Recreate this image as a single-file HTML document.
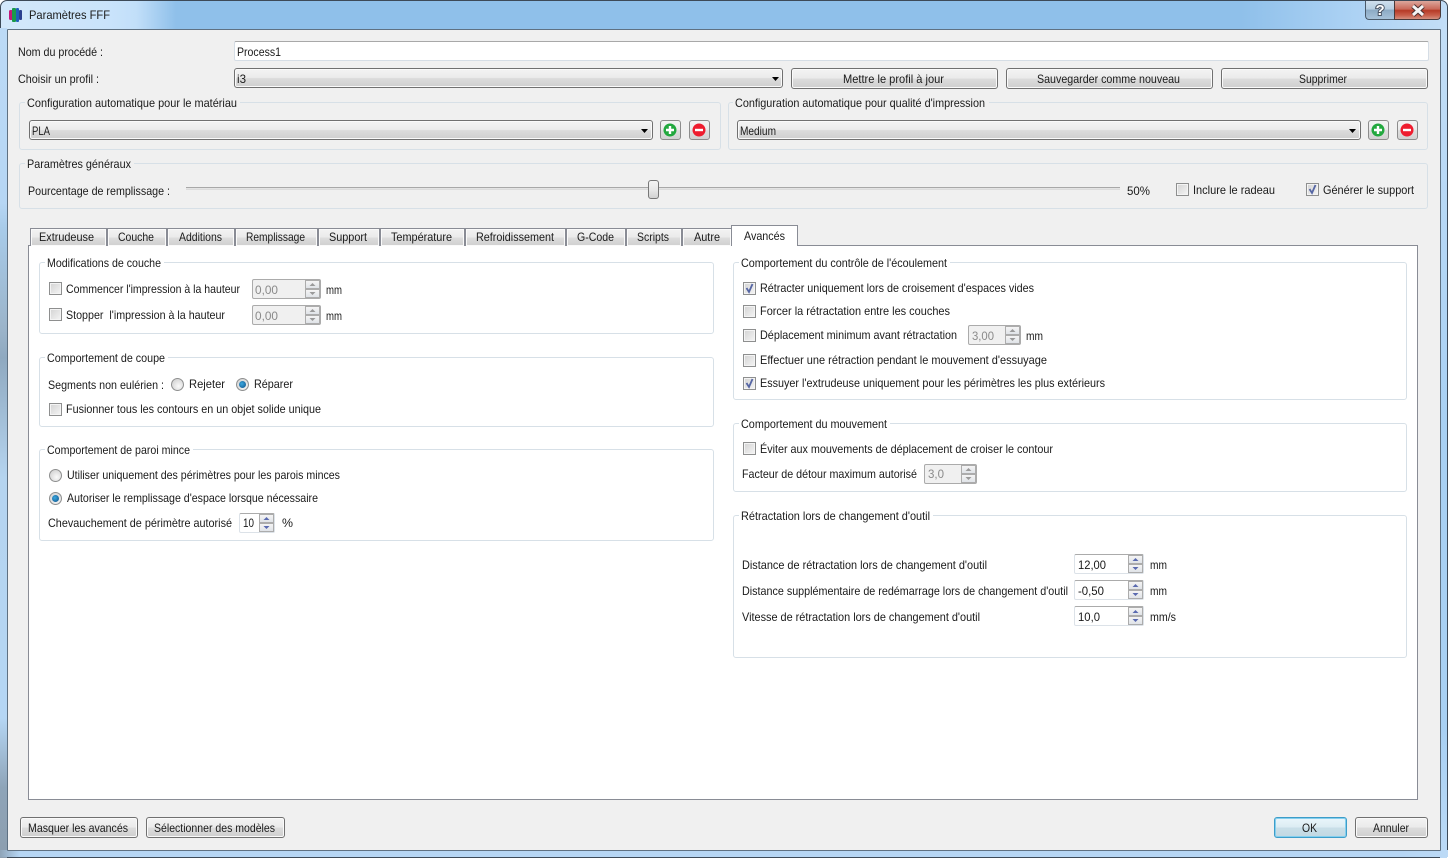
<!DOCTYPE html>
<html lang="fr"><head><meta charset="utf-8"><title>Paramètres FFF</title>
<style>
html,body{margin:0;padding:0;width:1448px;height:858px;overflow:hidden;background:#fff}
div{position:absolute;box-sizing:border-box}
#win{left:0;top:0;width:1448px;height:858px;border:1px solid #3d4a58;border-radius:7px 7px 4px 4px;background:linear-gradient(90deg,#d3e8fb 0,#c9e3fb 110px,#c2dff9 135px,#8fc0ea 175px,#8fc0ea 1240px,#a9d0f3 1340px,#c3def7 1447px);overflow:hidden}
#lft{left:0;top:28px;width:7px;height:830px;background:linear-gradient(180deg,#bcdaf6 0,#b6d6f4 175px,#a8cbe9 200px,#9bb4ca 300px,#8fa9c0 330px,#b5d4ef 450px,#b5d6f4 690px,#8ea4b8 760px,#8d9fb0 820px)}
#rgt{left:1440px;top:28px;width:7px;height:830px;background:linear-gradient(180deg,#c3def7,#a8d0f3 400px,#a8d0f3 700px,#bcdaf6)}
#bot{left:0;top:850px;width:1448px;height:7px;background:linear-gradient(90deg,#8ea4b8,#b6d6f4 20px,#b6d6f4 1400px,#bcdaf6)}
#cli{left:7px;top:29px;width:1434px;height:822px;background:#f0f0f0;border:1px solid #5f7182;border-radius:1px}
.le{background:#fff;border:1px solid #d5dde5;border-top-color:#a8a8a8;border-radius:2px}
.cb,.bt{border:1px solid #707070;border-radius:3px;background:linear-gradient(180deg,#f3f3f3 0,#ebebeb 48%,#dcdcdc 52%,#cfcfcf 100%);box-shadow:inset 0 0 0 1px #fafafa}
.ic{border:1px solid #8c8c8c;border-radius:3px;background:linear-gradient(180deg,#f3f3f3 0,#ebebeb 48%,#dedede 52%,#d2d2d2 100%)}
.ok{border:1px solid #3d9dc9;border-radius:3px;background:linear-gradient(180deg,#eaf6fb 0,#dcecf3 48%,#c9dfe8 52%,#c2d8e2 100%);box-shadow:inset 0 0 0 1px #84cfee}
.gb{border:1px solid #d7e0e7;border-radius:3px}
.lg{background:#f0f0f0;height:10px}
.lw{background:#fff;height:10px}
.ck{width:13px;height:13px;border:1px solid #8e8f8f;background:#f4f4f4}
.ck:after{content:"";position:absolute;left:1px;top:1px;width:9px;height:9px;background:linear-gradient(135deg,#d6d6d6,#f2f2f2)}
.ra{width:13px;height:13px;border:1px solid #8e8f8f;border-radius:50%;background:radial-gradient(circle at 60% 65%,#fafafa,#d8d8d8 70%)}
.ra.on:after{content:"";position:absolute;left:2px;top:2px;width:7px;height:7px;border-radius:50%;background:radial-gradient(circle at 40% 40%,#3aa7df,#0e4f86)}
.sp{background:#fff;border:1px solid #dce2e8;border-top-color:#ababab;border-radius:2px}
.sp.d{background:#f0f0f0;border:1px solid #ababab}
.sb{width:15px;height:9px;background:linear-gradient(180deg,#f4f4f4,#dfe3e8);border:1px solid #acacac}
.tab{top:228px;height:18px;border:1px solid #898c95;border-bottom:0;background:linear-gradient(180deg,#f2f2f2 0,#ebebeb 48%,#dddddd 52%,#cfcfcf 100%);box-shadow:inset 0 0 0 1px #fafafa}
svg{position:absolute;left:0;top:0}
text{font-family:"Liberation Sans",sans-serif;font-size:12px;fill:#1a1a1a}
.g{fill:#8a8a8a}
</style></head><body>
<div id="win"></div>
<div id="lft"></div><div id="rgt"></div><div id="bot"></div>
<div id="cli"></div>

<div style="left:1365px;top:1px;width:29px;height:19px;border:1px solid #4a5a6a;border-top:0;border-right:0;border-radius:0 0 0 4px;background:linear-gradient(180deg,#cfdfee 0,#b6cee2 45%,#8caac4 50%,#a6c2da 100%)"></div>
<div style="left:1394px;top:1px;width:47px;height:19px;border:1px solid #4a3a3a;border-top:0;border-radius:0 0 4px 0;background:linear-gradient(180deg,#dca79c 0,#c9695a 45%,#b53a26 52%,#c9604c 80%,#d49080 100%)"></div>

<div class="le" style="left:234px;top:41px;width:1195px;height:20px"></div>
<div class="cb" style="left:234px;top:68px;width:549px;height:20px"></div>
<div class="bt" style="left:791px;top:68px;width:207px;height:21px"></div>
<div class="bt" style="left:1006px;top:68px;width:207px;height:21px"></div>
<div class="bt" style="left:1221px;top:68px;width:207px;height:21px"></div>

<div class="gb" style="left:19px;top:102px;width:702px;height:48px"></div>
<div class="gb" style="left:728px;top:102px;width:700px;height:48px"></div>
<div class="lg" style="left:25px;top:98px;width:215px"></div>
<div class="lg" style="left:733px;top:98px;width:256px"></div>
<div class="cb" style="left:29px;top:120px;width:624px;height:20px"></div>
<div class="ic" style="left:660px;top:120px;width:21px;height:20px"></div>
<div class="ic" style="left:689px;top:120px;width:21px;height:20px"></div>
<div class="cb" style="left:737px;top:120px;width:624px;height:20px"></div>
<div class="ic" style="left:1368px;top:120px;width:21px;height:20px"></div>
<div class="ic" style="left:1397px;top:120px;width:21px;height:20px"></div>

<div class="gb" style="left:19px;top:163px;width:1409px;height:46px"></div>
<div class="lg" style="left:25px;top:159px;width:109px"></div>
<div style="left:186px;top:187px;width:934px;height:3px;background:#e4e4e4;border-top:1px solid #a8a8a8;border-bottom:1px solid #dcdcdc"></div>
<div style="left:648px;top:180px;width:11px;height:19px;border:1px solid #777;border-radius:3px;background:linear-gradient(180deg,#f4f4f4,#e8e8e8 50%,#d2d2d2)"></div>
<div class="ck" style="left:1176px;top:183px"></div>
<div class="ck" style="left:1306px;top:183px"></div>

<div style="left:28px;top:245px;width:1390px;height:555px;background:#fff;border:1px solid #898c95"></div>
<div class="tab" style="left:30px;width:77px"></div>
<div class="tab" style="left:107px;width:60px"></div>
<div class="tab" style="left:167px;width:68px"></div>
<div class="tab" style="left:235px;width:83px"></div>
<div class="tab" style="left:318px;width:62px"></div>
<div class="tab" style="left:380px;width:85px"></div>
<div class="tab" style="left:465px;width:101px"></div>
<div class="tab" style="left:566px;width:60px"></div>
<div class="tab" style="left:626px;width:56px"></div>
<div class="tab" style="left:682px;width:50px"></div>
<div style="left:731px;top:225px;width:67px;height:21px;background:#fff;border:1px solid #898c95;border-bottom:0"></div>

<div class="gb" style="left:39px;top:262px;width:675px;height:72px"></div>
<div class="gb" style="left:39px;top:357px;width:675px;height:70px"></div>
<div class="gb" style="left:39px;top:449px;width:675px;height:92px"></div>
<div class="gb" style="left:733px;top:262px;width:674px;height:138px"></div>
<div class="gb" style="left:733px;top:423px;width:674px;height:69px"></div>
<div class="gb" style="left:733px;top:515px;width:674px;height:143px"></div>
<div class="lw" style="left:45px;top:258px;width:119px"></div>
<div class="lw" style="left:45px;top:353px;width:123px"></div>
<div class="lw" style="left:45px;top:445px;width:148px"></div>
<div class="lw" style="left:739px;top:258px;width:211px"></div>
<div class="lw" style="left:739px;top:419px;width:151px"></div>
<div class="lw" style="left:739px;top:511px;width:194px"></div>

<div class="ck" style="left:49px;top:282px"></div>
<div class="ck" style="left:49px;top:308px"></div>
<div class="ck" style="left:49px;top:403px"></div>
<div class="ra" style="left:171px;top:378px"></div>
<div class="ra on" style="left:236px;top:378px"></div>
<div class="ra" style="left:49px;top:469px"></div>
<div class="ra on" style="left:49px;top:492px"></div>

<div class="ck" style="left:743px;top:282px"></div>
<div class="ck" style="left:743px;top:305px"></div>
<div class="ck" style="left:743px;top:329px"></div>
<div class="ck" style="left:743px;top:354px"></div>
<div class="ck" style="left:743px;top:377px"></div>
<div class="ck" style="left:743px;top:442px"></div>

<div class="sp d" style="left:252px;top:279px;width:69px;height:20px"></div>
<div class="sb" style="left:305px;top:280px"></div><div class="sb" style="left:305px;top:289px"></div>
<div class="sp d" style="left:252px;top:305px;width:69px;height:20px"></div>
<div class="sb" style="left:305px;top:306px"></div><div class="sb" style="left:305px;top:315px"></div>
<div class="sp d" style="left:968px;top:325px;width:53px;height:20px"></div>
<div class="sb" style="left:1005px;top:326px"></div><div class="sb" style="left:1005px;top:335px"></div>
<div class="sp d" style="left:924px;top:464px;width:53px;height:20px"></div>
<div class="sb" style="left:961px;top:465px"></div><div class="sb" style="left:961px;top:474px"></div>
<div class="sp" style="left:239px;top:513px;width:36px;height:20px"></div>
<div class="sb" style="left:259px;top:514px"></div><div class="sb" style="left:259px;top:523px"></div>
<div class="sp" style="left:1074px;top:554px;width:70px;height:20px"></div>
<div class="sb" style="left:1128px;top:555px"></div><div class="sb" style="left:1128px;top:564px"></div>
<div class="sp" style="left:1074px;top:580px;width:70px;height:20px"></div>
<div class="sb" style="left:1128px;top:581px"></div><div class="sb" style="left:1128px;top:590px"></div>
<div class="sp" style="left:1074px;top:606px;width:70px;height:20px"></div>
<div class="sb" style="left:1128px;top:607px"></div><div class="sb" style="left:1128px;top:616px"></div>

<div class="bt" style="left:20px;top:817px;width:118px;height:21px"></div>
<div class="bt" style="left:146px;top:817px;width:139px;height:21px"></div>
<div class="ok" style="left:1274px;top:817px;width:73px;height:21px"></div>
<div class="bt" style="left:1355px;top:817px;width:73px;height:21px"></div>

<svg width="1448" height="858" viewBox="0 0 1448 858" xmlns="http://www.w3.org/2000/svg">
<!-- app icon -->
<rect x="9" y="10" width="4" height="10" rx="1.500" fill="#c2187a"/>
<rect x="12" y="8" width="4" height="14" rx="1" fill="#1a9a4a"/>
<rect x="16" y="8" width="3" height="14" rx="1" fill="#1f5fb8"/>
<rect x="19" y="10" width="3" height="10" rx="1" fill="#2b3f8f"/>
<!-- title buttons -->
<text x="1375.500" y="15" style="font-size:15px;font-weight:bold;fill:#fff;stroke:#4a5566;stroke-width:2;paint-order:stroke">?</text>
<path d="M1413 6l10 9M1423 6l-10 9" stroke="#4a3030" stroke-width="5"/>
<path d="M1413 6l10 9M1423 6l-10 9" stroke="#f4f4f4" stroke-width="3"/>
<!-- combo arrows -->
<path d="M772 77h7l-3.500 4z" fill="#000"/>
<path d="M641 129h7l-3.500 4z" fill="#000"/>
<path d="M1349 129h7l-3.500 4z" fill="#000"/>
<!-- plus / minus -->
<circle cx="670" cy="130" r="6.500" fill="#22a83e"/><path d="M666 130h8M670 126v8" stroke="#fff" stroke-width="2.400"/>
<circle cx="699" cy="130" r="6.500" fill="#ee1c2e"/><path d="M695 130h8" stroke="#fff" stroke-width="2.400"/>
<circle cx="1378" cy="130" r="6.500" fill="#22a83e"/><path d="M1374 130h8M1378 126v8" stroke="#fff" stroke-width="2.400"/>
<circle cx="1407" cy="130" r="6.500" fill="#ee1c2e"/><path d="M1403 130h8" stroke="#fff" stroke-width="2.400"/>
<!-- checks -->
<g fill="none" stroke="#5666a4" stroke-width="1.800">
<path d="M1309.500 189l2.500 4 3.500-8"/>
<path d="M746.500 288l2.500 4 3.500-8"/>
<path d="M746.500 383l2.500 4 3.500-8"/>
</g>
<!-- spin arrows -->
<g fill="#9a9a9a">
<path d="M309.500 286l3-3 3 3zM309.500 292l3 3 3-3z"/>
<path d="M309.500 312l3-3 3 3zM309.500 318l3 3 3-3z"/>
<path d="M1009.500 332l3-3 3 3zM1009.500 338l3 3 3-3z"/>
<path d="M965.500 471l3-3 3 3zM965.500 477l3 3 3-3z"/>
</g>
<g fill="#5a6ab0">
<path d="M263.500 520l3-3 3 3zM263.500 526l3 3 3-3z"/>
<path d="M1132.500 561l3-3 3 3zM1132.500 567l3 3 3-3z"/>
<path d="M1132.500 587l3-3 3 3zM1132.500 593l3 3 3-3z"/>
<path d="M1132.500 613l3-3 3 3zM1132.500 619l3 3 3-3z"/>
</g>

<g>
<text x="29" y="19" textLength="81" lengthAdjust="spacingAndGlyphs">Paramètres FFF</text>
<text x="18" y="56" textLength="85" lengthAdjust="spacingAndGlyphs">Nom du procédé :</text>
<text x="237" y="56" textLength="44" lengthAdjust="spacingAndGlyphs">Process1</text>
<text x="18" y="83" textLength="81" lengthAdjust="spacingAndGlyphs">Choisir un profil :</text>
<text x="237" y="83" textLength="9" lengthAdjust="spacingAndGlyphs">i3</text>
<text x="843" y="83" textLength="101" lengthAdjust="spacingAndGlyphs">Mettre le profil à jour</text>
<text x="1037" y="83" textLength="143" lengthAdjust="spacingAndGlyphs">Sauvegarder comme nouveau</text>
<text x="1299" y="83" textLength="48" lengthAdjust="spacingAndGlyphs">Supprimer</text>
<text x="27" y="107" textLength="210" lengthAdjust="spacingAndGlyphs">Configuration automatique pour le matériau</text>
<text x="735" y="107" textLength="250" lengthAdjust="spacingAndGlyphs">Configuration automatique pour qualité d'impression</text>
<text x="32" y="135" textLength="18" lengthAdjust="spacingAndGlyphs">PLA</text>
<text x="740" y="135" textLength="36" lengthAdjust="spacingAndGlyphs">Medium</text>
<text x="27" y="168" textLength="104" lengthAdjust="spacingAndGlyphs">Paramètres généraux</text>
<text x="28" y="195" textLength="142" lengthAdjust="spacingAndGlyphs">Pourcentage de remplissage :</text>
<text x="1127" y="195" textLength="23" lengthAdjust="spacingAndGlyphs">50%</text>
<text x="1193" y="194" textLength="82" lengthAdjust="spacingAndGlyphs">Inclure le radeau</text>
<text x="1323" y="194" textLength="91" lengthAdjust="spacingAndGlyphs">Générer le support</text>

<text x="39" y="241" textLength="55" lengthAdjust="spacingAndGlyphs">Extrudeuse</text>
<text x="118" y="241" textLength="36" lengthAdjust="spacingAndGlyphs">Couche</text>
<text x="179" y="241" textLength="43" lengthAdjust="spacingAndGlyphs">Additions</text>
<text x="246" y="241" textLength="59" lengthAdjust="spacingAndGlyphs">Remplissage</text>
<text x="329" y="241" textLength="38" lengthAdjust="spacingAndGlyphs">Support</text>
<text x="391" y="241" textLength="61" lengthAdjust="spacingAndGlyphs">Température</text>
<text x="476" y="241" textLength="78" lengthAdjust="spacingAndGlyphs">Refroidissement</text>
<text x="577" y="241" textLength="37" lengthAdjust="spacingAndGlyphs">G-Code</text>
<text x="637" y="241" textLength="32" lengthAdjust="spacingAndGlyphs">Scripts</text>
<text x="694" y="241" textLength="26" lengthAdjust="spacingAndGlyphs">Autre</text>
<text x="744" y="240" textLength="41" lengthAdjust="spacingAndGlyphs">Avancés</text>

<text x="47" y="267" textLength="114" lengthAdjust="spacingAndGlyphs">Modifications de couche</text>
<text x="66" y="293" textLength="174" lengthAdjust="spacingAndGlyphs">Commencer l'impression à la hauteur</text>
<text x="255" y="294" textLength="23" lengthAdjust="spacingAndGlyphs" class="g">0,00</text>
<text x="326" y="294" textLength="16" lengthAdjust="spacingAndGlyphs">mm</text>
<text x="66" y="319" textLength="159" lengthAdjust="spacingAndGlyphs" xml:space="preserve">Stopper  l'impression à la hauteur</text>
<text x="255" y="320" textLength="23" lengthAdjust="spacingAndGlyphs" class="g">0,00</text>
<text x="326" y="320" textLength="16" lengthAdjust="spacingAndGlyphs">mm</text>
<text x="47" y="362" textLength="118" lengthAdjust="spacingAndGlyphs">Comportement de coupe</text>
<text x="48" y="389" textLength="116" lengthAdjust="spacingAndGlyphs">Segments non eulérien :</text>
<text x="189" y="388" textLength="36" lengthAdjust="spacingAndGlyphs">Rejeter</text>
<text x="254" y="388" textLength="39" lengthAdjust="spacingAndGlyphs">Réparer</text>
<text x="66" y="413" textLength="255" lengthAdjust="spacingAndGlyphs">Fusionner tous les contours en un objet solide unique</text>
<text x="47" y="454" textLength="143" lengthAdjust="spacingAndGlyphs">Comportement de paroi mince</text>
<text x="67" y="479" textLength="273" lengthAdjust="spacingAndGlyphs">Utiliser uniquement des périmètres pour les parois minces</text>
<text x="67" y="502" textLength="251" lengthAdjust="spacingAndGlyphs">Autoriser le remplissage d'espace lorsque nécessaire</text>
<text x="48" y="527" textLength="184" lengthAdjust="spacingAndGlyphs">Chevauchement de périmètre autorisé</text>
<text x="243" y="527" textLength="11" lengthAdjust="spacingAndGlyphs">10</text>
<text x="282" y="527" textLength="11" lengthAdjust="spacingAndGlyphs">%</text>

<text x="741" y="267" textLength="206" lengthAdjust="spacingAndGlyphs">Comportement du contrôle de l'écoulement</text>
<text x="760" y="292" textLength="274" lengthAdjust="spacingAndGlyphs">Rétracter uniquement lors de croisement d'espaces vides</text>
<text x="760" y="315" textLength="190" lengthAdjust="spacingAndGlyphs">Forcer la rétractation entre les couches</text>
<text x="760" y="339" textLength="197" lengthAdjust="spacingAndGlyphs">Déplacement minimum avant rétractation</text>
<text x="972" y="340" textLength="22" lengthAdjust="spacingAndGlyphs" class="g">3,00</text>
<text x="1026" y="340" textLength="17" lengthAdjust="spacingAndGlyphs">mm</text>
<text x="760" y="364" textLength="287" lengthAdjust="spacingAndGlyphs">Effectuer une rétraction pendant le mouvement d'essuyage</text>
<text x="760" y="387" textLength="345" lengthAdjust="spacingAndGlyphs">Essuyer l'extrudeuse uniquement pour les périmètres les plus extérieurs</text>
<text x="741" y="428" textLength="146" lengthAdjust="spacingAndGlyphs">Comportement du mouvement</text>
<text x="760" y="453" textLength="293" lengthAdjust="spacingAndGlyphs">Éviter aux mouvements de déplacement de croiser le contour</text>
<text x="742" y="478" textLength="175" lengthAdjust="spacingAndGlyphs">Facteur de détour maximum autorisé</text>
<text x="928" y="478" textLength="16" lengthAdjust="spacingAndGlyphs" class="g">3,0</text>
<text x="741" y="520" textLength="189" lengthAdjust="spacingAndGlyphs">Rétractation lors de changement d'outil</text>
<text x="742" y="569" textLength="245" lengthAdjust="spacingAndGlyphs">Distance de rétractation lors de changement d'outil</text>
<text x="1078" y="569" textLength="28" lengthAdjust="spacingAndGlyphs">12,00</text>
<text x="1150" y="569" textLength="17" lengthAdjust="spacingAndGlyphs">mm</text>
<text x="742" y="595" textLength="326" lengthAdjust="spacingAndGlyphs">Distance supplémentaire de redémarrage lors de changement d'outil</text>
<text x="1078" y="595" textLength="26" lengthAdjust="spacingAndGlyphs">-0,50</text>
<text x="1150" y="595" textLength="17" lengthAdjust="spacingAndGlyphs">mm</text>
<text x="742" y="621" textLength="238" lengthAdjust="spacingAndGlyphs">Vitesse de rétractation lors de changement d'outil</text>
<text x="1078" y="621" textLength="22" lengthAdjust="spacingAndGlyphs">10,0</text>
<text x="1150" y="621" textLength="26" lengthAdjust="spacingAndGlyphs">mm/s</text>

<text x="28" y="832" textLength="100" lengthAdjust="spacingAndGlyphs">Masquer les avancés</text>
<text x="154" y="832" textLength="121" lengthAdjust="spacingAndGlyphs">Sélectionner des modèles</text>
<text x="1302" y="832" textLength="15" lengthAdjust="spacingAndGlyphs">OK</text>
<text x="1373" y="832" textLength="36" lengthAdjust="spacingAndGlyphs">Annuler</text>
</g>
</svg>
</body></html>
